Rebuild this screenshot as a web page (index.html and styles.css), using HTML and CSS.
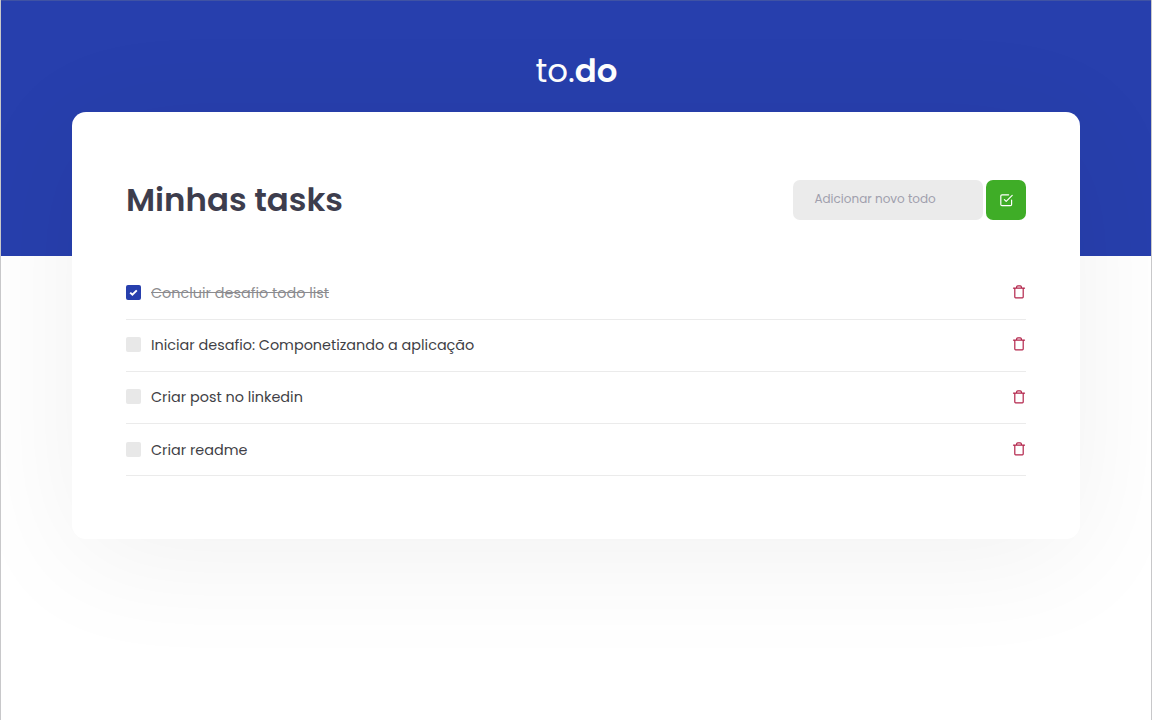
FILE: index.html
```html
<!DOCTYPE html>
<html lang="pt-BR">
<head>
<meta charset="utf-8">
<title>to.do</title>
<link rel="stylesheet" href="styles.css">
</head>
<body>
<svg class="sprite" aria-hidden="true">
  <symbol id="trash" viewBox="0 0 14 16">
    <path d="M1.5 4.2h11M2.8 4.2v8.9q0 .8.8.8h6.8q.8 0 .8-.8V4.2M4.6 4V3q0-1.2 1.2-1.2h2.4q1.2 0 1.2 1.2v1"/>
  </symbol>
</svg>
<header class="header"><div class="logo"><span class="logo-light">to.</span><strong class="logo-bold">do</strong></div></header>
<main class="card">
  <div class="card-header">
    <h1 class="title">Minhas tasks</h1>
    <form class="new-task">
      <input class="new-task-input" type="text" placeholder="Adicionar novo todo">
      <button class="new-task-button" type="button" aria-label="Adicionar">
        <svg class="check-icon" viewBox="0 0 24 24"><path d="M9 11l3 3L22 4"/><path d="M21 12v7a2 2 0 0 1-2 2H5a2 2 0 0 1-2-2V5a2 2 0 0 1 2-2h11"/></svg>
      </button>
    </form>
  </div>
  <ul class="tasks">
    <li class="task done"><span class="checkbox"><svg class="tick" viewBox="0 0 15 15"><path d="M4.2 7.6l2.2 2.1 4.4-4.3"/></svg></span><p class="label">Concluir desafio todo list</p><svg class="trash"><use href="#trash"/></svg></li>
    <li class="task"><span class="checkbox"></span><p class="label">Iniciar desafio: Componetizando a aplicação</p><svg class="trash"><use href="#trash"/></svg></li>
    <li class="task"><span class="checkbox"></span><p class="label">Criar post no linkedin</p><svg class="trash"><use href="#trash"/></svg></li>
    <li class="task"><span class="checkbox"></span><p class="label">Criar readme</p><svg class="trash"><use href="#trash"/></svg></li>
  </ul>
</main>
</body>
</html>
```
FILE: styles.css
```css
* { box-sizing: border-box; margin: 0; padding: 0; }
body {
  height: 720px;
  overflow: hidden;
  background: #fff;
  border-left: 1px solid #c8c8ca;
  border-right: 1px solid #c8c8ca;
  font-family: Poppins, Inter, sans-serif;
  color: #3d3d4d;
}
.sprite { display: none; }
.header {
  height: 255.5px;
  margin: 0 -1px;
  padding-top: 46px;
  background: #273fad;
  border: 1px solid #4053a4;
  border-bottom: 0;
}
.logo {
  display: flex;
  justify-content: center;
  padding-left: 1px;
  color: #fff;
  font-size: 32.4px;
  line-height: 48px;
}
.logo-light { font-weight: 400; }
.logo-bold { font-weight: 600; }
.card {
  position: relative;
  width: 1008px;
  height: 427px;
  margin: -143.7px auto 0;
  padding: 68px 54px 0;
  border-radius: 14px;
  background: #fff;
  box-shadow: 0 18px 126px rgba(0, 0, 0, 0.06);
}
.card-header {
  display: flex;
  justify-content: space-between;
  align-items: center;
  height: 40px;
}
.title { font-size: 32.4px; font-weight: 600; line-height: 40px; }
.new-task { display: flex; gap: 3.6px; }
.new-task-input {
  width: 190px;
  height: 39.6px;
  padding: 0 21.6px 2px;
  border: 0;
  border-radius: 7px;
  background: #ebebeb;
  font: 12px Poppins, Inter, sans-serif;
}
.new-task-input::placeholder { color: #a09fad; opacity: 1; }
.new-task-button {
  display: flex;
  align-items: center;
  justify-content: center;
  width: 39.6px;
  height: 39.6px;
  border: 0;
  border-radius: 7px;
  background: #3fad27;
}
.check-icon {
  width: 14.4px;
  height: 14.4px;
  fill: none;
  stroke: #fff;
  stroke-width: 2;
  stroke-linecap: round;
  stroke-linejoin: round;
}
.tasks { margin-top: 47.6px; list-style: none; }
.task {
  display: flex;
  align-items: center;
  height: 52.2px;
  border-bottom: 1px solid #ebebeb;
}
.checkbox {
  width: 15px;
  height: 15px;
  margin-right: 10px;
  margin-bottom: 1px;
  border-radius: 2px;
  background: #e8e8e8;
}
.done .checkbox { background: #273fad; }
.tick { display: block; width: 15px; height: 15px; fill: none; stroke: #fff; stroke-width: 2; }
.label { flex: 1; font-size: 14.4px; line-height: 22px; color: #3f3f46; }
.done .label { opacity: 0.6; text-decoration: line-through; }
.trash {
  width: 14px;
  height: 16px;
  fill: none;
  stroke: #b3254b;
  stroke-width: 1.2;
  stroke-linejoin: round;
  stroke-linecap: round;
  margin-bottom: 1.6px;
}
```
